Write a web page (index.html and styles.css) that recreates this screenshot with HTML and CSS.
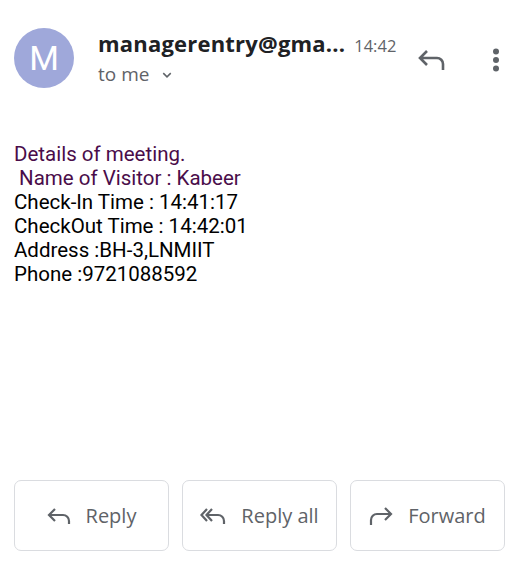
FILE: index.html
```html
<!DOCTYPE html>
<html>
<head>
<meta charset="utf-8">
<link rel="stylesheet" href="styles.css">
</head>
<body>
<div class="page">
  <header class="head">
    <div class="avatar">M</div>
    <div class="meta">
      <div class="line1"><span class="from">managerentry@gma...</span><span class="time">14:42</span></div>
      <div class="line2">to me <svg class="chev" viewBox="0 0 24 24" width="18" height="18"><path d="M7 9.5l5 5 5-5" fill="none" stroke="#5f6368" stroke-width="2"/></svg></div>
    </div>
    <div class="actions">
      <svg class="hreply" viewBox="0 0 28 22" width="28" height="22"><path d="M9 2 2 9l7 7M2.5 9H19a6 6 0 0 1 6 6v6" fill="none" stroke="#5f6368" stroke-width="2.6"/></svg>
      <svg class="dots" viewBox="0 0 8 24" width="8" height="24"><circle cx="4" cy="3.5" r="3" fill="#5f6368"/><circle cx="4" cy="12" r="3" fill="#5f6368"/><circle cx="4" cy="20.5" r="3" fill="#5f6368"/></svg>
    </div>
  </header>
  <main class="body">
    <div class="purple">Details of meeting.</div>
    <div class="purple">&nbsp;Name of Visitor : Kabeer</div>
    <div>Check-In Time : 14:41:17</div>
    <div>CheckOut Time : 14:42:01</div>
    <div>Address :BH-3,LNMIIT</div>
    <div>Phone :9721088592</div>
  </main>
  <footer class="buttons">
    <div class="btn"><svg viewBox="0 0 24 20" width="24" height="20"><path d="M8 3 2 9l6 6M2.5 9H16a6 6 0 0 1 6 6v3" fill="none" stroke="#5f6368" stroke-width="2.2"/></svg><span>Reply</span></div>
    <div class="btn"><svg viewBox="0 0 26 20" width="26" height="20"><path d="M7 3 1.5 9 7 15M12 3 6.5 9l5.5 6M7 9H18a6 6 0 0 1 6 6v3" fill="none" stroke="#5f6368" stroke-width="2.2"/></svg><span>Reply all</span></div>
    <div class="btn"><svg viewBox="0 0 24 20" width="24" height="20"><path d="M16 2l6 6-6 6M21.5 8H8a6 6 0 0 0-6 6v5" fill="none" stroke="#5f6368" stroke-width="2.2"/></svg><span>Forward</span></div>
  </footer>
</div>
</body>
</html>
```
FILE: styles.css
```css
* { box-sizing: border-box; }
html, body { margin: 0; padding: 0; background: #fff; }
body { font-family: Roboto, "Noto Sans", sans-serif; width: 530px; height: 568px; overflow: hidden; }
.page { display: flex; flex-direction: column; height: 568px; }
.head { display: flex; align-items: flex-start; padding: 28px 0 0 14px; }
.avatar { width: 60px; height: 60px; border-radius: 50%; background: #9fa8da; color: #fff; font-size: 34px; display: flex; align-items: center; justify-content: center; flex-shrink: 0; }
.meta { margin-left: 24px; padding-top: 0; }
.line1 { display: flex; align-items: baseline; height: 26px; }
.from { font-family: "Open Sans", Roboto, sans-serif; font-size: 22px; font-weight: 700; color: #202124; letter-spacing: 0.2px; }
.time { font-family: "Open Sans", Roboto, sans-serif; font-size: 16.5px; color: #5f6368; margin-left: 9px; }
.line2 { font-family: "Open Sans", Roboto, sans-serif; font-size: 19px; color: #5f6368; margin-top: 7px; display: flex; align-items: center; }
.chev { margin-left: 9px; margin-top: 2px; }
.actions { display: flex; align-items: center; margin-left: auto; margin-right: 30px; margin-top: 20px; }
.dots { margin-left: 46px; }
.body { padding: 54px 0 0 14px; font-size: 20.5px; line-height: 24px; color: #000; flex: 1; }
.purple { color: #4a0d4a; }
.buttons { display: flex; gap: 13px; padding: 0 0 17px 14px; }
.btn { width: 155px; height: 71px; border: 1px solid #dadce0; border-radius: 7px; display: flex; align-items: center; justify-content: center; gap: 15px; font-family: "Open Sans", Roboto, sans-serif; font-size: 20px; color: #5f6368; }
.btn svg { flex-shrink: 0; }
```
